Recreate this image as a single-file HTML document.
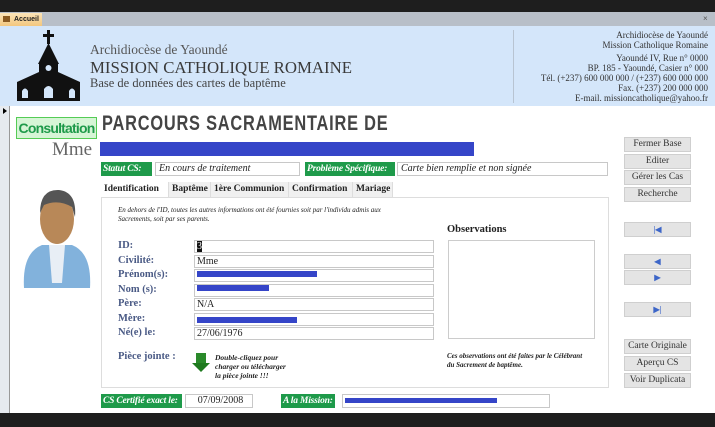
<!DOCTYPE html>
<html><head><meta charset="utf-8"><style>
*{margin:0;padding:0;box-sizing:border-box}
body{width:715px;height:427px;position:relative;overflow:hidden;background:#fff;font-family:"Liberation Serif",serif;color:#222}
.a{position:absolute}
.lbl{position:absolute;background:#1e9a4a;color:#fff;font-style:italic;font-weight:bold;font-size:9.5px;padding:1px 2px;line-height:12px;height:14px;white-space:nowrap;overflow:hidden;letter-spacing:-0.2px}
.inp{position:absolute;border:1px solid #c8c8c8;background:#fff;font-size:10px;line-height:12px;padding-left:3px;height:14px;font-style:italic;white-space:nowrap}
.fl{position:absolute;left:118px;font-size:10.5px;color:#4a5a85;font-weight:bold}
.fi{position:absolute;left:194px;width:240px;height:13px;border:1px solid #c8c8c8;font-size:10px;line-height:11px;padding-left:2px}
.btn{position:absolute;left:624px;width:67px;height:15px;background:#e4e4e4;border:1px solid #cfcfcf;font-size:9.5px;text-align:center;line-height:13px;color:#333;white-space:nowrap}
.nav{color:#3d66c8;font-size:8px;font-weight:bold}
.tab{position:absolute;top:182px;height:15px;font-size:9.5px;font-weight:bold;line-height:15px;padding-left:3px;background:#f0f0f0;border-right:1px solid #ddd;white-space:nowrap;overflow:hidden}
.rt{position:absolute;right:7px;text-align:right;font-size:9px;color:#333;line-height:10px}
</style></head><body>
<div class="a" style="left:0;top:0;width:715px;height:12px;background:#1e1e1e"></div>
<div class="a" style="left:0;top:12px;width:715px;height:14px;background:#b8bfc8"></div>
<div class="a" style="left:0;top:13px;width:42px;height:13px;background:linear-gradient(#fbe4b8,#f3c77e);font-size:7px;font-weight:bold;font-family:'Liberation Sans',sans-serif;line-height:13px;padding-left:14px">Accueil</div>
<div class="a" style="left:3px;top:16px;width:7px;height:6px;background:#8a5a20"></div>
<div class="a" style="left:703px;top:14px;font-size:8px;color:#555;font-family:'Liberation Sans',sans-serif">×</div>
<div class="a" style="left:0;top:26px;width:715px;height:80px;background:#d4e6fa"></div>
<svg class="a" style="left:17px;top:30px" width="63" height="71" viewBox="0 0 63 71">
<rect x="30" y="0" width="3" height="14" fill="#111"/><rect x="26" y="4" width="11" height="3" fill="#111"/>
<polygon points="31.5,13 21,34 42,34" fill="#111"/>
<rect x="22" y="34" width="19" height="37" fill="#111"/>
<polygon points="22,42 0,52 0,71 22,71" fill="#111"/><polygon points="41,42 63,52 63,71 41,71" fill="#111"/>
<circle cx="31.5" cy="38" r="3" fill="#d4e6fa"/>
<path d="M5 68 v-7 q3-5 6 0 v7z M27 68 v-9 q4.5-6 9 0 v9z M52 68 v-7 q3-5 6 0 v7z" fill="#d4e6fa"/>
</svg>
<div class="a" style="left:90px;top:42px;font-size:13.5px;color:#555">Archidiocèse de Yaoundé</div>
<div class="a" style="left:90px;top:58px;font-size:16.8px;color:#3a3a3a">MISSION CATHOLIQUE ROMAINE</div>
<div class="a" style="left:90px;top:76px;font-size:12.5px;color:#444">Base de données des cartes de baptême</div>
<div class="a" style="left:513px;top:30px;width:1px;height:73px;background:#b8c4d2"></div>
<div class="rt" style="top:30px">Archidiocèse de Yaoundé<br>Mission Catholique Romaine</div>
<div class="rt" style="top:53px">Yaoundé IV, Rue n° 0000<br>BP. 185 - Yaoundé, Casier n° 000<br>Tél. (+237) 600 000 000 / (+237) 600 000 000<br>Fax. (+237) 200 000 000<br>E-mail. missioncatholique@yahoo.fr</div>
<div class="a" style="left:0;top:106px;width:10px;height:307px;background:#e6eaef;border-right:1px solid #999"></div>
<div class="a" style="left:3px;top:108px;width:0;height:0;border-left:4px solid #000;border-top:3px solid transparent;border-bottom:3px solid transparent"></div>
<div class="a" style="left:16px;top:117px;width:81px;height:22px;background:#d6f5d6;border:1px solid #5c5;color:#1e9a4a;font-family:'Liberation Sans',sans-serif;font-weight:bold;font-size:14px;line-height:20px;text-align:center;letter-spacing:-0.8px;white-space:nowrap;overflow:hidden">Consultation</div>
<div class="a" style="left:102px;top:112px;font-family:'Liberation Sans',sans-serif;font-weight:900;font-size:21px;color:#444;letter-spacing:1px;transform:scaleX(0.78);transform-origin:left;white-space:nowrap">PARCOURS SACRAMENTAIRE DE</div>
<div class="a" style="left:52px;top:139px;font-size:19px;color:#666">Mme</div>
<div class="a" style="left:100px;top:142px;width:374px;height:14px;background:#3545c8"></div>
<div class="lbl" style="left:101px;top:162px;width:51px">Statut CS:</div>
<div class="inp" style="left:155px;top:162px;width:145px">En cours de traitement</div>
<div class="lbl" style="left:305px;top:162px;width:90px">Problème Spécifique:</div>
<div class="inp" style="left:397px;top:162px;width:211px">Carte bien remplie et non signée</div>
<svg class="a" style="left:22px;top:183px" width="70" height="108" viewBox="0 0 70 108">
<path d="M2 105 Q0 70 20 62 L50 62 Q70 70 68 105 Z" fill="#82b2dc"/>
<path d="M27 62 L43 62 L40 100 L30 100Z" fill="#e8eef5"/>
<ellipse cx="35" cy="36" rx="17" ry="25" fill="#b88858"/>
<path d="M18 30 Q18 6 37 7 Q55 9 53 34 L50 24 Q36 16 22 22Z" fill="#555"/>
</svg>
<div class="tab" style="left:101px;width:68px;background:#fff">Identification</div>
<div class="tab" style="left:169px;width:42px">Baptême</div>
<div class="tab" style="left:211px;width:78px">1ère Communion</div>
<div class="tab" style="left:289px;width:64px">Confirmation</div>
<div class="tab" style="left:353px;width:40px">Mariage</div>
<div class="a" style="left:101px;top:197px;width:508px;height:191px;border:1px solid #ddd"></div>
<div class="a" style="left:118px;top:206px;font-size:7px;font-style:italic;line-height:9px">En dehors de l'ID, toutes les autres informations ont été fournies soit par l'individu admis aux<br>Sacrements, soit par ses parents.</div>
<div class="fl" style="top:240px">ID:</div><div class="fi" style="top:240px"><span style="background:#111;color:#fff">3</span></div>
<div class="fl" style="top:255px">Civilité:</div><div class="fi" style="top:255px">Mme</div>
<div class="fl" style="top:269px">Prénom(s):</div><div class="fi" style="top:269px"><div class="a" style="left:2px;top:1px;width:120px;height:6px;background:#3545c8"></div></div>
<div class="fl" style="top:284px">Nom (s):</div><div class="fi" style="top:284px"><div class="a" style="left:2px;top:0;width:72px;height:6px;background:#3545c8"></div></div>
<div class="fl" style="top:298px">Père:</div><div class="fi" style="top:298px">N/A</div>
<div class="fl" style="top:313px">Mère:</div><div class="fi" style="top:313px"><div class="a" style="left:2px;top:3px;width:100px;height:6px;background:#3545c8"></div></div>
<div class="fl" style="top:327px">Né(e) le:</div><div class="fi" style="top:327px">27/06/1976</div>
<div class="fl" style="top:351px">Pièce jointe :</div>
<svg class="a" style="left:192px;top:353px" width="18" height="19"><rect x="4" y="0" width="10" height="10" fill="#2a8a2a"/><polygon points="0,10 18,10 9,19" fill="#1f7a1f"/></svg>
<div class="a" style="left:215px;top:353px;font-size:7.5px;font-style:italic;font-weight:bold;line-height:9px">Double-cliquez pour<br>charger ou télécharger<br>la pièce jointe !!!</div>
<div class="a" style="left:447px;top:224px;font-size:10.5px;font-weight:bold">Observations</div>
<div class="a" style="left:448px;top:240px;width:147px;height:99px;border:1px solid #ccc"></div>
<div class="a" style="left:447px;top:352px;font-size:7px;font-style:italic;font-weight:bold;line-height:9px">Ces observations ont été faites par le Célébrant<br>du Sacrement de baptême.</div>
<div class="lbl" style="left:101px;top:394px;width:81px">CS Certifié exact le:</div>
<div class="inp" style="left:185px;top:394px;width:68px;text-align:center;font-style:normal">07/09/2008</div>
<div class="lbl" style="left:281px;top:394px;width:54px">A la Mission:</div>
<div class="inp" style="left:342px;top:394px;width:208px"><div class="a" style="left:2px;top:3px;width:152px;height:5px;background:#3545c8"></div></div>
<div class="btn" style="top:137px">Fermer Base</div>
<div class="btn" style="top:154px">Editer</div>
<div class="btn" style="top:170px">Gérer les Cas</div>
<div class="btn" style="top:187px">Recherche</div>
<div class="btn nav" style="top:222px">|◀</div>
<div class="btn nav" style="top:254px">◀</div>
<div class="btn nav" style="top:270px">▶</div>
<div class="btn nav" style="top:302px">▶|</div>
<div class="btn" style="top:339px">Carte Originale</div>
<div class="btn" style="top:356px">Aperçu CS</div>
<div class="btn" style="top:373px">Voir Duplicata</div>
<div class="a" style="left:0;top:413px;width:715px;height:14px;background:#1e1e1e"></div>
</body></html>
